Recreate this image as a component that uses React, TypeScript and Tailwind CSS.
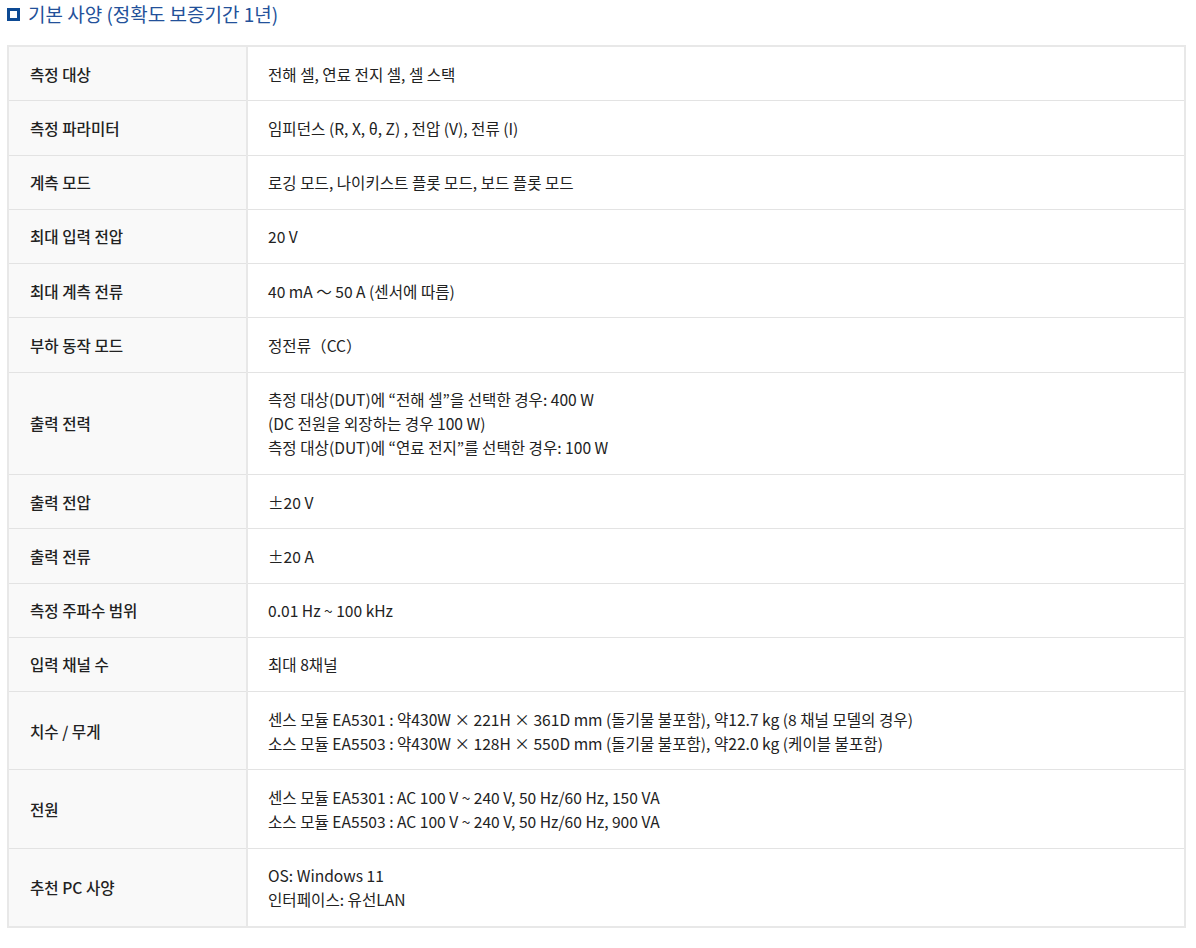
const rows: { label: string; lines: string[] }[] = [
  { label: '측정 대상', lines: ['전해 셀, 연료 전지 셀, 셀 스택'] },
  { label: '측정 파라미터', lines: ['임피던스 (R, X, θ, Z) , 전압 (V), 전류 (I)'] },
  { label: '계측 모드', lines: ['로깅 모드, 나이키스트 플롯 모드, 보드 플롯 모드'] },
  { label: '최대 입력 전압', lines: ['20 V'] },
  { label: '최대 계측 전류', lines: ['40 mA ～ 50 A (센서에 따름)'] },
  { label: '부하 동작 모드', lines: ['정전류（CC）'] },
  {
    label: '출력 전력',
    lines: [
      '측정 대상(DUT)에 “전해 셀”을 선택한 경우: 400 W',
      '(DC 전원을 외장하는 경우 100 W)',
      '측정 대상(DUT)에 “연료 전지”를 선택한 경우: 100 W',
    ],
  },
  { label: '출력 전압', lines: ['±20 V'] },
  { label: '출력 전류', lines: ['±20 A'] },
  { label: '측정 주파수 범위', lines: ['0.01 Hz ~ 100 kHz'] },
  { label: '입력 채널 수', lines: ['최대 8채널'] },
  {
    label: '치수 / 무게',
    lines: [
      '센스 모듈 EA5301 : 약430W × 221H × 361D mm (돌기물 불포함), 약12.7 kg (8 채널 모델의 경우)',
      '소스 모듈 EA5503 : 약430W × 128H × 550D mm (돌기물 불포함), 약22.0 kg (케이블 불포함)',
    ],
  },
  {
    label: '전원',
    lines: [
      '센스 모듈 EA5301 : AC 100 V ~ 240 V, 50 Hz/60 Hz, 150 VA',
      '소스 모듈 EA5503 : AC 100 V ~ 240 V, 50 Hz/60 Hz, 900 VA',
    ],
  },
  { label: '추천 PC 사양', lines: ['OS: Windows 11', '인터페이스: 유선LAN'] },
];

export default function App() {
  return (
    <div
      className="bg-white min-h-screen px-[7px] pt-[1px] text-[#222]"
      style={{ fontFamily: '"Noto Sans CJK KR", "Noto Sans", sans-serif' }}
    >
      <h2 className="flex items-center gap-[8px] text-[19px] leading-[26px] text-[#23519a] font-normal">
        <span className="inline-block w-[13px] h-[13px] border-[3px] border-[#0d4a94] bg-white" />
        기본 사양 (정확도 보증기간 1년)
      </h2>

      <table className="mt-[18px] w-[1179px] border-collapse border-2 border-[#e8e8e8] text-[15.6px] leading-[24px]">
        <tbody>
          {rows.map((row) => (
            <tr key={row.label} className="border-b border-[#e3e3e3]">
              <th className="w-[239px] bg-[#f9f9f9] border-r-2 border-[#e8e8e8] pl-[21px] py-[14.65px] text-left font-medium align-middle">
                {row.label}
              </th>
              <td className="pl-[20px] py-[14.65px] align-middle">
                {row.lines.map((line) => (
                  <div key={line}>{line}</div>
                ))}
              </td>
            </tr>
          ))}
        </tbody>
      </table>
    </div>
  );
}
